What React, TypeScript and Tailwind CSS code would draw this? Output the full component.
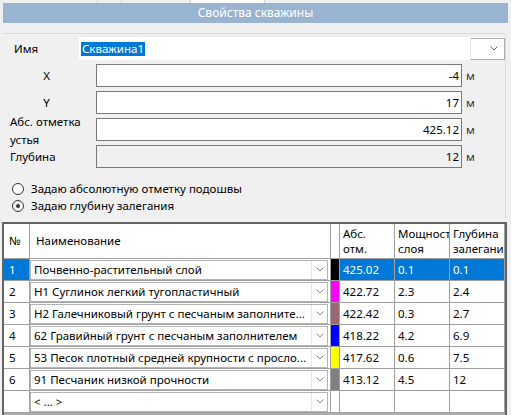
import React from 'react';

const FONT = { fontFamily: '"Noto Sans", "DejaVu Sans", sans-serif' };

interface Layer {
  n: string;
  name: string;
  color: string;
  abs: string;
  power: string;
  depth: string;
}

const layers: Layer[] = [
  { n: '1', name: 'Почвенно-растительный слой', color: '#000000', abs: '425.02', power: '0.1', depth: '0.1' },
  { n: '2', name: 'Н1 Суглинок легкий тугопластичный', color: '#ff00ff', abs: '422.72', power: '2.3', depth: '2.4' },
  { n: '3', name: 'Н2 Галечниковый грунт с песчаным заполните...', color: '#9a6870', abs: '422.42', power: '0.3', depth: '2.7' },
  { n: '4', name: '62 Гравийный грунт с песчаным заполнителем', color: '#0000ff', abs: '418.22', power: '4.2', depth: '6.9' },
  { n: '5', name: '53 Песок плотный средней крупности с просло...', color: '#ffff00', abs: '417.62', power: '0.6', depth: '7.5' },
  { n: '6', name: '91 Песчаник низкой прочности', color: '#808080', abs: '413.12', power: '4.5', depth: '12' },
  { n: '', name: '< ... >', color: '#ffffff', abs: '', power: '', depth: '' },
];

const Chevron = ({ color = '#606060' }: { color?: string }) => (
  <svg width="8" height="5" viewBox="0 0 8 5" fill="none">
    <path d="M0.5 0.5 L4 4 L7.5 0.5" stroke={color} strokeWidth="1" />
  </svg>
);

const Field = ({ label, value, disabled = false, twoLine = false, center = false }: { label: React.ReactNode; value: string; disabled?: boolean; twoLine?: boolean; center?: boolean }) => (
  <div className="flex items-center h-[23px]">
    <div className={`w-[93px] shrink-0 leading-[17px] ${center ? 'text-center pr-[6px]' : 'pl-[7px]'} ${twoLine ? 'pt-[3px]' : ''}`}>
      {label}
    </div>
    <div
      className={`w-[366px] h-[23px] border border-[#7a7a7a] flex items-center justify-end pr-[2px] ${disabled ? 'bg-[#f0f0f0]' : 'bg-white'}`}
    >
      {value}
    </div>
    <div className="pl-[4px] text-[#333]">м</div>
  </div>
);

const Radio = ({ checked, label }: { checked: boolean; label: string }) => (
  <div className="flex items-center h-[17px]">
    <div className="w-[12px] h-[12px] ml-[9px] rounded-full border border-[#333] bg-white flex items-center justify-center">
      {checked && <div className="w-[4px] h-[4px] rounded-full bg-[#333]" />}
    </div>
    <span className="ml-[7px]">{label}</span>
  </div>
);

export default function App() {
  return (
    <div className="w-[511px] h-[415px] overflow-hidden bg-[#f0f0f0] text-[11.5px] text-black" style={FONT}>
      {/* tab strip remnant */}
      <div className="h-[3px] flex">
        <div className="w-[97px]" />
        <div className="w-[25px] border-x border-[#d0d0d0]" />
        <div className="w-[68px]" />
        <div className="w-[75px] bg-white border-x border-[#d0d0d0]" />
      </div>

      {/* caption */}
      <div className="mx-[3px] h-[20px] bg-[#99b4d1] text-white text-center leading-[20px] text-[12px]">Свойства скважины</div>

      {/* properties panel */}
      <div className="mt-[10px] ml-[3px] w-[503px] h-[185px] border-t border-r border-[#dadada] pt-[3px]">
        <div className="flex items-center h-[23px]">
          <div className="w-[76px] pl-[11px]">Имя</div>
          <div className="flex-1 h-[23px] bg-white flex items-center">
            <span className="ml-[2px] bg-[#0078d7] text-white leading-[14px] px-px">Скважина1</span>
            <div className="ml-auto w-[35px] h-[22px] border border-[#adadad] border-l-[#e8e8e8] flex items-center justify-center pl-[12px]">
              <Chevron />
            </div>
          </div>
        </div>

        <div className="mt-[4px] flex flex-col gap-[4px]">
          <Field label="X" value="-4" center />
          <Field label="Y" value="17" center />
          <Field
            label={
              <div className="leading-[18px] -mt-[1px]">
                Абс. отметка
                <br />
                устья
              </div>
            }
            value="425.12"
            twoLine
          />
          <Field label="Глубина" value="12" disabled />
        </div>

        <div className="mt-[12px] flex flex-col">
          <Radio checked={false} label="Задаю абсолютную отметку подошвы" />
          <Radio checked label="Задаю глубину залегания" />
        </div>
      </div>

      {/* layers grid */}
      <div className="mt-[4px] ml-[2px] w-[505px] h-[200px] border-l-2 border-t-2 border-r-2 border-[#646464] bg-[#ababab]">
        <div className="flex h-[35px] bg-white border-b border-[#a0a0a0]">
          <div className="w-[26px] border-r border-[#a0a0a0] pl-[5px] flex items-center">№</div>
          <div className="w-[301px] border-r border-[#a0a0a0] pl-[6px] flex items-center">Наименование</div>
          <div className="w-[9px] border-r border-[#a0a0a0]" />
          {[['Абс.', 'отм.'], ['Мощность', 'слоя'], ['Глубина', 'залегания']].map(([a, b], i) => (
            <div key={i} className="w-[55px] border-r border-[#a0a0a0] pl-[3px] leading-[15px] pt-[2px] overflow-hidden whitespace-nowrap">
              {a}
              <br />
              {b}
            </div>
          ))}
        </div>

        {layers.map((l, i) => {
          const sel = i === 0;
          const cell = `w-[55px] border-r border-[#a0a0a0] pl-[3px] flex items-center ${sel ? 'bg-[#0078d7] text-white' : 'bg-white'}`;
          return (
            <div key={i} className="flex h-[22px] border-b border-[#a0a0a0]">
              <div className={`w-[26px] border-r border-[#a0a0a0] pl-[5px] flex items-center ${sel ? 'bg-[#0078d7] text-white' : 'bg-white'}`}>{l.n}</div>
              <div className="w-[301px] border-r border-[#a0a0a0] bg-white flex items-center">
                <div className="w-[298px] h-[20px] border border-[#b4b4b4] flex items-center">
                  <span className="pl-[3px] flex-1 overflow-hidden whitespace-nowrap">{l.name}</span>
                  <div className="w-[16px] h-full border-l border-[#e6e6e6] flex items-center justify-center">
                    <Chevron color="#8a8a8a" />
                  </div>
                </div>
              </div>
              <div className="w-[9px] border-r border-[#a0a0a0] bg-white flex">
                <div className="w-full h-full" style={{ backgroundColor: l.color }} />
              </div>
              <div className={cell}>{l.abs}</div>
              <div className={cell}>{l.power}</div>
              <div className={cell}>{l.depth}</div>
            </div>
          );
        })}
      </div>
    </div>
  );
}
